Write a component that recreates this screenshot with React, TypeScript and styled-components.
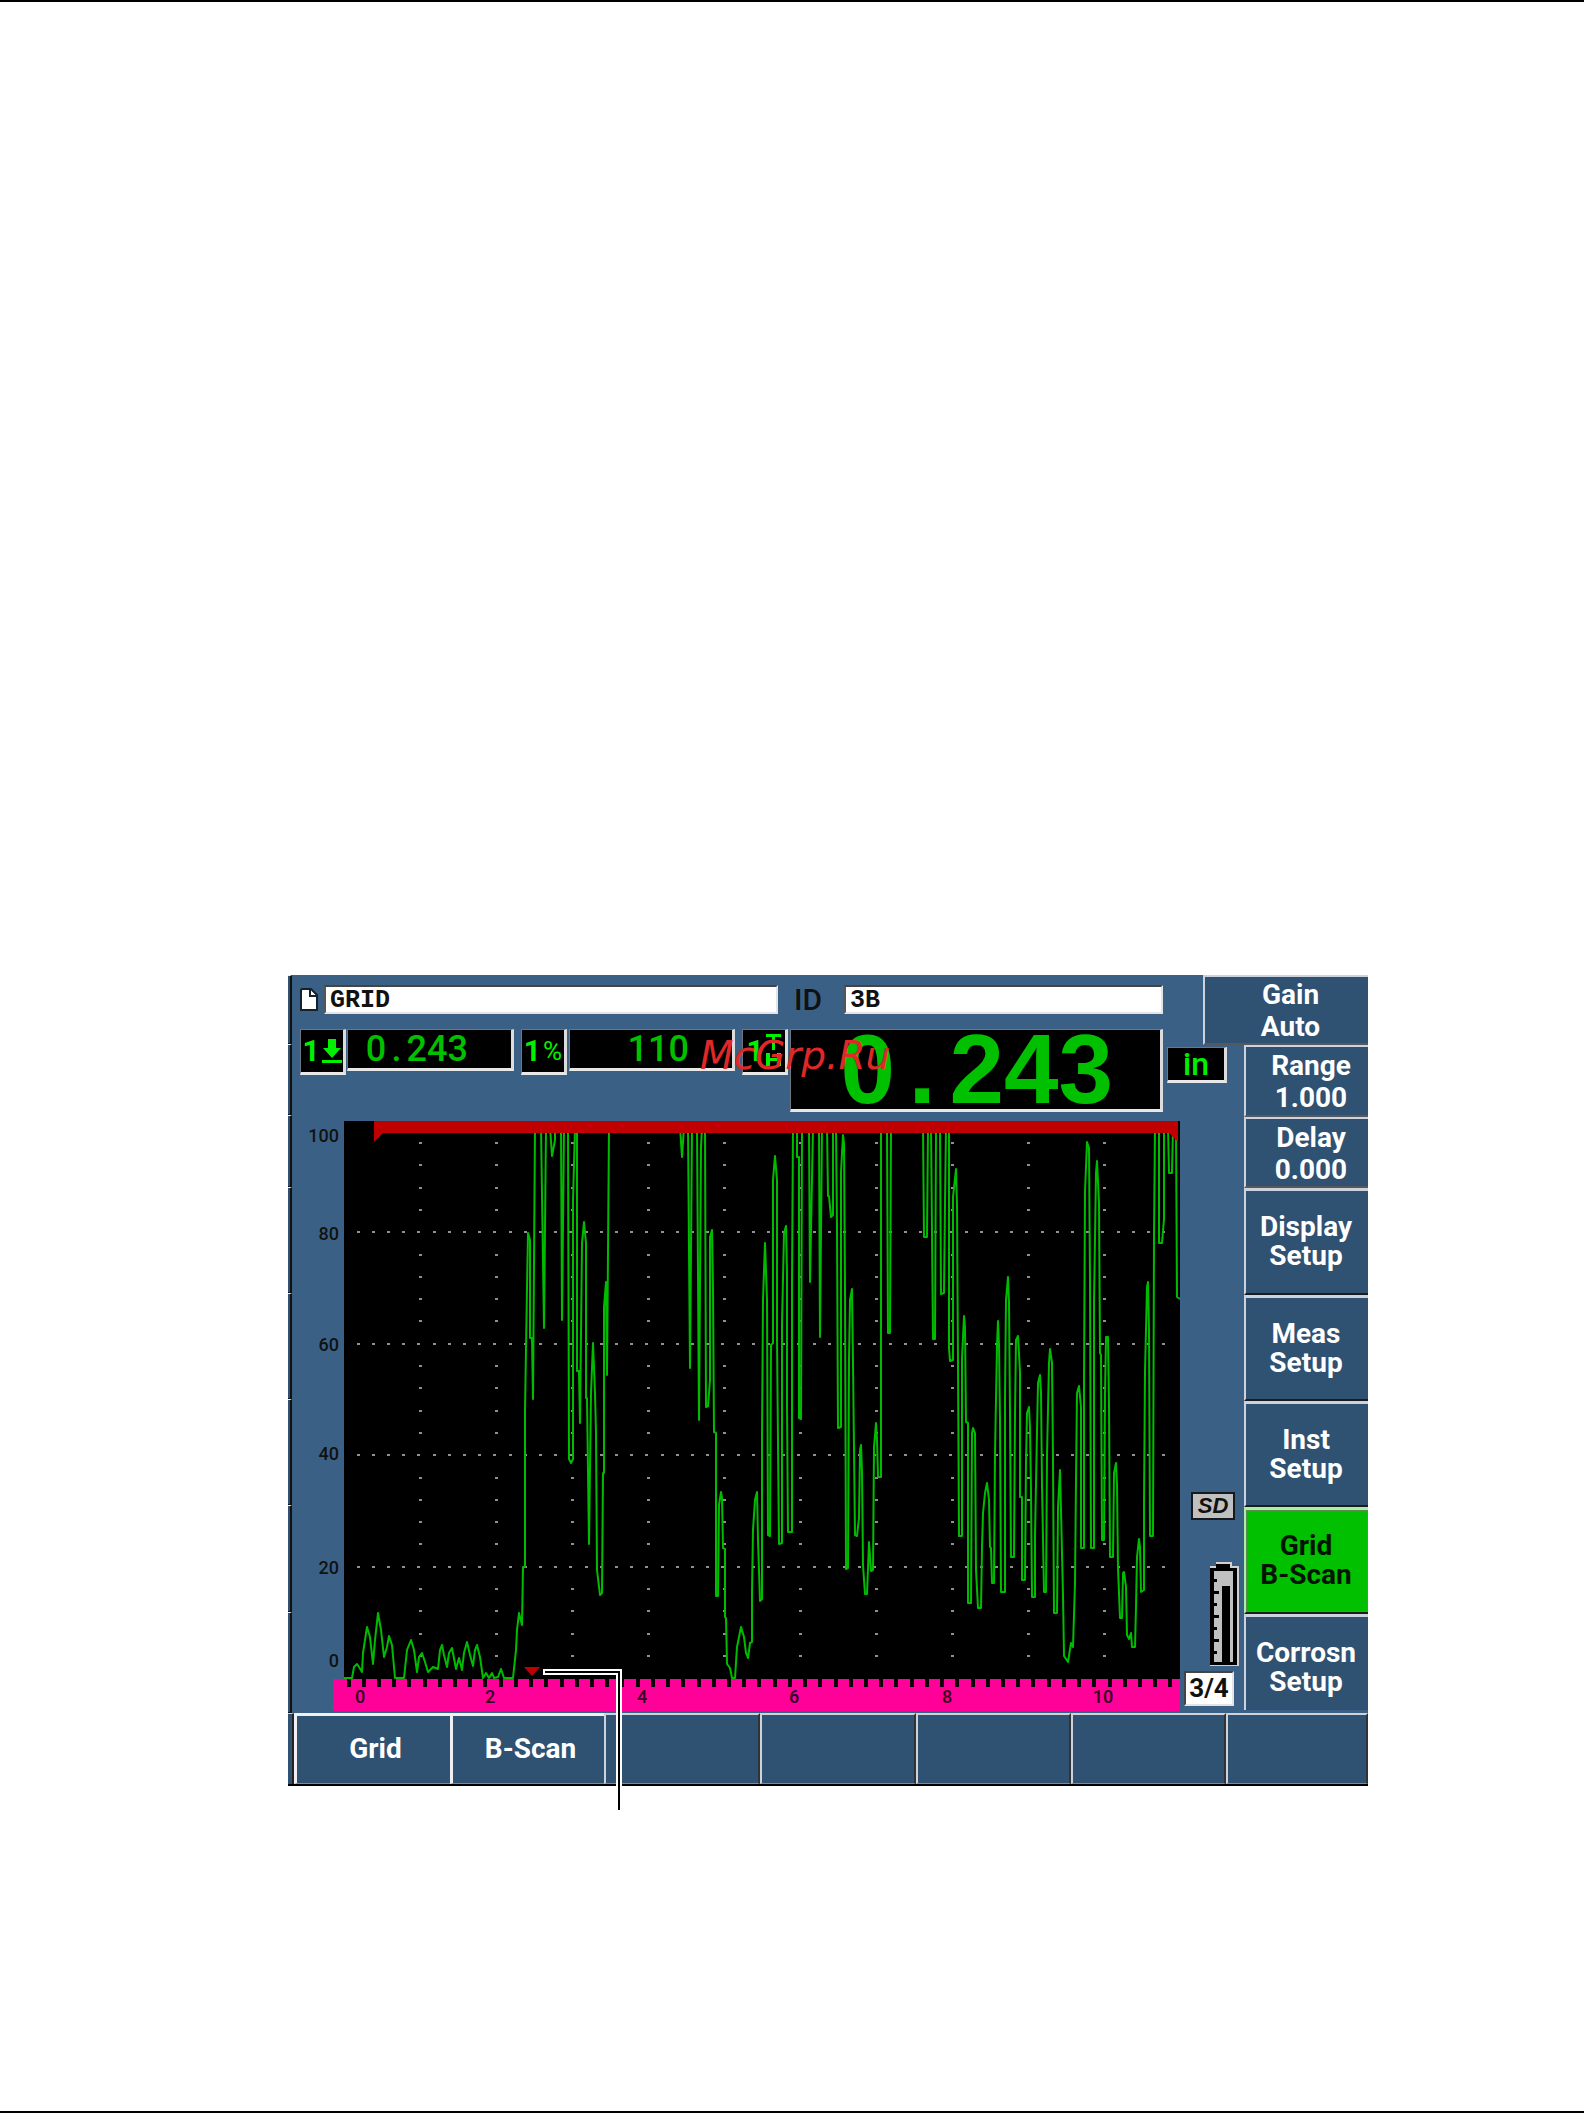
import React from "react";
import styled, { createGlobalStyle, css } from "styled-components";

const color = {
  panel: "#3a6185",
  key: "#2f5172",
  light: "#cdd2dc",
  bright: "#f0f0f4",
  shade: "#55585c",
  green: "#00c000",
  lime: "#00f000",
  red: "#c00000",
  pink: "#ff0098",
};

const ui = `Roboto, "Liberation Sans", sans-serif`;

const GlobalStyle = createGlobalStyle`
  *, *::before, *::after { box-sizing: border-box; }
  body { margin: 0; background: #fff; font-family: ${ui}; }
`;

const Page = styled.main`
  min-height: 100vh;
  padding: 973px 216px 0 288px;
  border-top: 2px solid #000;
  border-bottom: 2px solid #000;
`;

const Device = styled.section`
  position: relative;
  display: flex;
  flex-direction: column;
  max-width: 1080px;
  background: ${color.panel};
`;

const Upper = styled.div`
  display: flex;
`;

const Edge = styled.div`
  display: grid;
  grid-template-rows: 69px 71px 72px 106px 106px 106px 107px 1fr;
  width: 4px;
`;

const EdgeCell = styled.span`
  background: ${color.key};
  border-right: 2px solid #111;
  border-top: 1px solid ${color.bright};
  border-bottom: 1px solid #111;
`;

const Main = styled.div`
  flex: 1;
  min-width: 0;
  display: flex;
  flex-direction: column;
`;

const TitleRow = styled.form`
  display: grid;
  grid-template-columns: 18px 460fr 66px 319fr;
  align-items: center;
  margin: 10px 81px 15px 8px;
`;

const DocLabel = styled.label`
  display: flex;
`;

const IdLabel = styled.label`
  padding-left: 16px;
  font-size: 30px;
  line-height: 29px;
  font-weight: 500;
  color: #111;
`;

const Field = styled.input<{ $offset?: boolean }>`
  min-width: 0;
  width: ${(p) => (p.$offset ? "calc(100% - 6px)" : "100%")};
  margin-left: ${(p) => (p.$offset ? "6px" : "0")};
  height: 29px;
  padding: 1px 0 0 4px;
  border: 2px solid;
  border-color: #444 #e4e4e4 #e4e4e4 #555;
  border-radius: 0;
  background: #fff;
  color: #111;
  font: bold 25px/24px "Liberation Mono", monospace;
`;

const ReadoutRow = styled.div`
  display: grid;
  grid-template-columns: 47px minmax(0, 174fr) 48px minmax(0, 173fr) 48px minmax(0, 377fr) 60px;
  align-items: start;
  margin: 0 17px 9px 8px;
  height: 83px;
`;

const inset = css`
  background: #000;
  border: solid;
  border-width: 1px 3px 3px 1px;
  border-color: #707680 #dcdcdc #e8e8e8 #707680;
`;

const Badge = styled.span`
  ${inset}
  display: flex;
  align-items: center;
  justify-content: center;
  gap: 2px;
  width: 46px;
  height: 46px;
  color: ${color.lime};
  font-size: 30px;
  line-height: 30px;
  font-weight: 700;
`;

const BadgeSign = styled.span`
  font-size: 26px;
  font-weight: 400;
`;

const Value = styled.output`
  ${inset}
  height: 42px;
  margin-right: 7px;
  padding-right: 43px;
  text-align: right;
  color: ${color.green};
  font-size: 36px;
  line-height: 38px;
  font-weight: 500;
`;

const BigValue = styled.output`
  ${inset}
  height: 83px;
  margin-right: 4px;
  padding-right: 47px;
  text-align: right;
  color: ${color.green};
  font: bold 98px/78px "Liberation Sans", sans-serif;
`;

const Point = styled.span`
  display: inline-block;
  width: 1ch;
  text-align: center;
`;

const Unit = styled.span`
  ${inset}
  height: 36px;
  margin-top: 18px;
  text-align: center;
  color: ${color.lime};
  font-size: 32px;
  line-height: 32px;
  font-weight: 500;
`;

const Scope = styled.div`
  flex: 1;
  display: grid;
  grid-template-columns: 41px 11px 1fr 64px;
  grid-template-rows: 558px 32px 2px;
`;

const ScaleY = styled.div`
  grid-column: 1 / 3;
  display: grid;
  grid-template-rows: 98px 111px 109px 114px 93px 20px;
  padding: 5px 5px 0 0;
  text-align: right;
  font-size: 18px;
  line-height: 20px;
  font-weight: 500;
  color: #111;
`;

const Plot = styled.svg`
  display: block;
  width: 100%;
  height: 558px;
  background: #000;
`;

const ScaleX = styled.div`
  grid-column: 2 / 4;
  grid-row: 2;
  background: ${color.pink};
`;

const Ticks = styled.svg`
  display: block;
  width: 100%;
  height: 8px;
`;

const ScaleXLabels = styled.div`
  display: grid;
  grid-template-columns: 130fr 152fr 152fr 153fr 156fr 91fr;
  padding-left: 13px;
  font-size: 18px;
  line-height: 20px;
  font-weight: 500;
  color: #300020;
`;

const ScaleXLabel = styled.span`
  width: 28px;
  text-align: center;
`;

const Status = styled.div`
  grid-column: 4;
  grid-row: 1 / 4;
  display: flex;
  flex-direction: column;
  justify-content: flex-end;
  padding: 0 5px 7px 4px;
`;

const SdCard = styled.span`
  align-self: flex-end;
  width: 44px;
  height: 28px;
  margin: 0 4px 42px 0;
  border: 2px solid #161a1c;
  background: #c0c0c0;
  color: #111;
  text-align: center;
  font: italic bold 22px/24px "Liberation Sans", sans-serif;
`;

const Battery = styled.svg`
  align-self: flex-end;
  width: 29px;
  height: 104px;
  margin-bottom: 5px;
`;

const PageCount = styled.span`
  width: 50px;
  height: 35px;
  border: 2px solid;
  border-color: #444 #e4e4e4 #e4e4e4 #444;
  background: #fff;
  text-align: center;
  font-size: 26px;
  line-height: 31px;
  font-weight: 700;
  color: #111;
`;

const Side = styled.nav`
  flex: 0 0 124px;
  display: grid;
  grid-template-rows: 70px 72px 71px 107px 106px 106px 107px 1fr;
`;

const keyBase = css`
  margin: 0;
  border: solid;
  border-radius: 0;
  background: ${color.key};
  color: #fff;
  font-family: ${ui};
  font-size: 28px;
  font-weight: 700;
  text-align: center;
  white-space: pre-line;
`;

const ParamKey = styled.button<{ $wide?: boolean }>`
  ${keyBase}
  margin-left: ${(p) => (p.$wide ? "-41px" : "0")};
  padding: 2px 0 0 8px;
  border-width: 2px 0 2px 2px;
  border-color: ${color.light} ${color.light} ${color.shade} ${color.light};
  line-height: 32px;
`;

const MenuKey = styled.button<{ $active?: boolean; $last?: boolean }>`
  ${keyBase}
  padding: ${(p) => (p.$last ? "6px 2px 0 0" : "0 2px 2px 0")};
  border-width: 3px 0 2px 2px;
  border-color: ${color.light} ${color.light} #1c1c1c ${color.light};
  line-height: 29px;
  ${(p) =>
    p.$last &&
    css`
      border-bottom-width: 0;
      margin-bottom: 3px;
    `}
  ${(p) =>
    p.$active &&
    css`
      background: ${color.green};
      color: #001400;
      border-color: #a8f0a8 #a8f0a8 #1c1c1c #a8f0a8;
      box-shadow: inset 0 0 0 1px #5c8c50;
    `}
`;

const Bottom = styled.nav`
  display: grid;
  grid-template-columns: 6px 156fr 154fr 156fr 156fr 155fr 155fr 142fr;
  height: 73px;
  border-bottom: 2px solid #000;
`;

const BottomTail = styled.span`
  background: ${color.key};
  border-top: 1px solid ${color.light};
  border-right: 2px solid #222;
`;

const BottomKey = styled.button<{ $used?: boolean }>`
  ${keyBase}
  padding: 0 0 2px 4px;
  line-height: 29px;
  border-width: ${(p) => (p.$used ? "3px 0 1px 3px" : "2px 2px 1px 2px")};
  border-color: ${(p) =>
    p.$used ? `${color.bright} #888 #888 ${color.bright}` : `${color.light} #333 #888 ${color.light}`};
`;

const Watermark = styled.span`
  position: absolute;
  top: 56px;
  left: 412px;
  color: #e02828;
  font: italic 39px/50px "DejaVu Sans", sans-serif;
`;

const Callout = styled.svg`
  position: absolute;
  top: 694px;
  left: 255px;
  width: 82px;
  height: 141px;
`;

const trace =
  "0,557 8,557 10,546 13,543 15,546 18,551 19,532 23,506 26,516 29,543 31,519 34,492 37,509 40,536 43,526 45,515 48,524 51,557 60,557 63,529 67,519 70,529 73,551 75,536 78,532 81,541 84,551 89,546 94,548 96,529 98,524 100,534 103,546 105,532 108,527 112,548 115,537 118,549 120,532 123,521 126,534 129,545 131,529 133,524 136,536 139,557 142,552 145,557 148,552 150,557 154,556 157,548 160,557 169,557 172,529 173,509 175,492 178,504 179,446 181,446 " +
  "181,289 183,167 184,112 186,119 186,217 188,217 189,278 191,6 197,6 200,207 202,6 206,6 208,35 211,19 211,6 217,6 218,199 220,6 224,6 225,338 227,342 229,338 229,79 231,6 233,6 233,250 235,250 236,302 238,122 240,101 242,122 242,277 243,277 245,423 247,272 249,222 251,272 252,312 253,449 256,474 258,472 259,352 260,352 260,186 262,161 263,254 265,6 " +
  "336,6 338,36 340,6 344,6 346,247 348,6 353,6 355,299 357,26 358,6 361,6 362,286 364,285 366,259 366,116 368,109 369,169 370,311 372,312 372,475 374,475 375,384 377,371 378,377 379,427 381,428 381,496 382,497 383,543 386,547 388,557 391,557 393,526 397,506 400,516 402,532 404,537 406,522 408,521 408,471 409,409 411,379 413,371 414,419 416,480 418,478 " +
  "418,316 419,179 421,122 423,179 424,414 426,415 427,224 429,222 429,59 431,35 433,59 433,217 435,423 438,422 438,203 440,112 442,105 443,152 443,284 444,411 448,411 448,164 449,6 453,6 453,36 455,36 455,297 457,298 458,6 465,6 466,161 469,6 475,6 476,216 478,6 483,6 484,75 485,75 487,96 489,94 489,6 492,6 493,107 494,307 497,306 497,51 499,14 500,22 " +
  "501,169 502,448 504,447 505,239 506,179 508,168 509,242 511,414 513,415 515,397 516,329 517,324 518,351 519,444 521,473 523,473 525,421 527,450 529,449 530,326 532,302 533,319 534,356 537,356 537,6 543,6 544,212 546,212 547,6 579,6 580,116 583,116 584,6 587,6 589,218 591,218 592,6 596,6 597,173 600,172 601,83 602,6 605,6 605,227 606,240 609,239 609,76 " +
  "612,48 613,84 614,242 615,415 618,415 618,237 620,195 621,207 622,301 624,302 624,482 627,482 628,312 629,307 631,312 632,449 634,487 637,487 638,426 639,392 641,372 643,362 645,379 646,426 647,427 648,462 650,462 651,332 653,224 654,200 655,224 656,299 657,471 661,471 661,276 662,179 664,156 665,182 666,292 667,436 670,436 671,292 672,219 674,215 676,251 " +
  "676,376 678,376 678,459 681,459 682,341 683,292 685,286 686,307 687,371 688,476 691,476 691,414 693,311 694,262 696,254 697,272 698,364 700,471 702,471 703,334 705,242 706,228 708,242 709,339 710,492 713,492 714,386 716,349 717,389 719,475 720,535 724,541 727,522 729,526 731,462 732,359 733,272 735,265 737,286 737,427 740,427 740,259 741,71 743,21 745,27 " +
  "746,161 747,427 750,427 750,181 752,52 753,40 755,82 756,232 757,234 758,419 760,419 761,272 762,216 764,216 765,284 766,436 769,436 770,352 772,342 773,364 774,447 776,497 778,497 779,452 780,451 782,466 783,514 785,518 787,512 788,526 791,526 792,486 793,436 795,418 796,426 797,471 800,469 800,381 801,251 803,166 804,161 805,209 806,415 809,415 810,114 " +
  "811,6 815,6 815,122 818,122 820,98 820,6 824,6 825,52 828,52 829,6 832,6 833,176 836,178";

const gridRows = [111, 223, 334, 446];
const gridColumns = [76, 152, 228, 304, 380, 456, 532, 608, 684, 760];

const range = (n: number) => Array.from({ length: n }, (_, i) => i);

function ScopePlot() {
  return (
    <Plot viewBox="0 0 836 558" preserveAspectRatio="none" role="img" aria-label="A-scan">
      <g fill="#909090">
        {gridRows.map((y) =>
          range(54).map((i) => <rect key={`${y}-${i}`} x={Math.round(12.5 + i * 15.2)} y={y - 1} width="3" height="2" />)
        )}
        {gridColumns.map((x) =>
          range(24).map((i) =>
            i % 5 === 4 ? null : (
              <rect key={`${x}-${i}`} x={x - 1} y={Math.round(21 + i * 22.3)} width="3" height="2" />
            )
          )
        )}
      </g>
      <polyline points={trace} fill="none" stroke="#00bc00" strokeWidth="2" strokeLinejoin="round" />
      <path d="M30 0H834V21L825 12H39L30 21Z" fill={color.red} />
      <path d="M180 546H196L188 555Z" fill={color.red} />
    </Plot>
  );
}

function DocIcon() {
  return (
    <svg width="18" height="24" viewBox="0 0 18 24" aria-hidden="true">
      <path d="M2 1H11L17 7V22H1V2Z" fill="#fff" stroke="#14202c" strokeWidth="2" />
      <path d="M10 1V8H17" fill="none" stroke="#14202c" strokeWidth="2" />
    </svg>
  );
}

function DepthIcon() {
  return (
    <svg width="20" height="24" viewBox="0 0 20 24" fill={color.lime} aria-hidden="true">
      <path d="M6 0H14V9H19L10 19L1 9H6Z" />
      <rect y="21" width="20" height="3" />
    </svg>
  );
}

function ThicknessIcon() {
  return (
    <svg width="16" height="36" viewBox="0 0 16 36" fill={color.lime} aria-hidden="true">
      <path d="M0 1H15V4H9V17H6V4H0Z" />
      <path d="M0 20H4V25H11V20H15V33H11V28H4V33H0Z" />
    </svg>
  );
}

function BatteryIcon() {
  return (
    <Battery viewBox="0 0 29 104" aria-label="Battery level">
      <path d="M0 4H6V0H22V4H29V104H0Z" fill="#d0d0d0" />
      <path d="M0 6H6V2H20V6H27V103H0Z" fill="#000" />
      <rect x="4" y="9" width="19" height="91" fill="#c0c0c0" />
      <rect x="12" y="24" width="8" height="77" fill="#000" />
      {range(7).map((i) => (
        <rect key={i} x="3" y={17 + i * 12} width={i % 2 ? 6 : 4} height="3" fill="#000" />
      ))}
    </Battery>
  );
}

export default function App() {
  return (
    <>
      <GlobalStyle />
      <Page>
        <Device>
          <Upper>
            <Edge>
              {range(8).map((i) => (
                <EdgeCell key={i} />
              ))}
            </Edge>
            <Main>
              <TitleRow>
                <DocLabel htmlFor="file" aria-label="File">
                  <DocIcon />
                </DocLabel>
                <Field id="file" defaultValue="GRID" $offset />
                <IdLabel htmlFor="location">ID</IdLabel>
                <Field id="location" defaultValue="3B" />
              </TitleRow>
              <ReadoutRow>
                <Badge>
                  1<DepthIcon />
                </Badge>
                <Value>
                  0<Point>.</Point>243
                </Value>
                <Badge>
                  1<BadgeSign>%</BadgeSign>
                </Badge>
                <Value>110</Value>
                <Badge>
                  1<ThicknessIcon />
                </Badge>
                <BigValue>
                  0<Point>.</Point>243
                </BigValue>
                <Unit>in</Unit>
              </ReadoutRow>
              <Scope>
                <ScaleY>
                  {[100, 80, 60, 40, 20, 0].map((n) => (
                    <span key={n}>{n}</span>
                  ))}
                </ScaleY>
                <ScopePlot />
                <ScaleX>
                  <Ticks viewBox="0 0 847 8" preserveAspectRatio="none" aria-hidden="true">
                    {range(55).map((i) => (
                      <rect key={i} x={Math.round(13.5 + i * 15.22)} width="4" height="8" fill="#100008" />
                    ))}
                  </Ticks>
                  <ScaleXLabels>
                    {[0, 2, 4, 6, 8, 10].map((n) => (
                      <ScaleXLabel key={n}>{n}</ScaleXLabel>
                    ))}
                  </ScaleXLabels>
                </ScaleX>
                <Status>
                  <SdCard>SD</SdCard>
                  <BatteryIcon />
                  <PageCount>3/4</PageCount>
                </Status>
              </Scope>
            </Main>
            <Side>
              <ParamKey $wide>{"Gain\nAuto"}</ParamKey>
              <ParamKey>{"Range\n1.000"}</ParamKey>
              <ParamKey>{"Delay\n0.000"}</ParamKey>
              <MenuKey>{"Display\nSetup"}</MenuKey>
              <MenuKey>{"Meas\nSetup"}</MenuKey>
              <MenuKey>{"Inst\nSetup"}</MenuKey>
              <MenuKey $active>{"Grid\nB-Scan"}</MenuKey>
              <MenuKey $last>{"Corrosn\nSetup"}</MenuKey>
            </Side>
          </Upper>
          <Bottom>
            <BottomTail />
            <BottomKey $used>Grid</BottomKey>
            <BottomKey $used>B-Scan</BottomKey>
            {range(5).map((i) => (
              <BottomKey key={i} aria-label={`Empty key ${i + 3}`} />
            ))}
          </Bottom>
          <Watermark>McGrp.Ru</Watermark>
          <Callout viewBox="0 0 82 141" fill="none" aria-hidden="true">
            <path d="M0 3H76V117" stroke="#fff" strokeWidth="6" />
            <path d="M2 3H76V141" stroke="#000" strokeWidth="2" />
          </Callout>
        </Device>
      </Page>
    </>
  );
}
